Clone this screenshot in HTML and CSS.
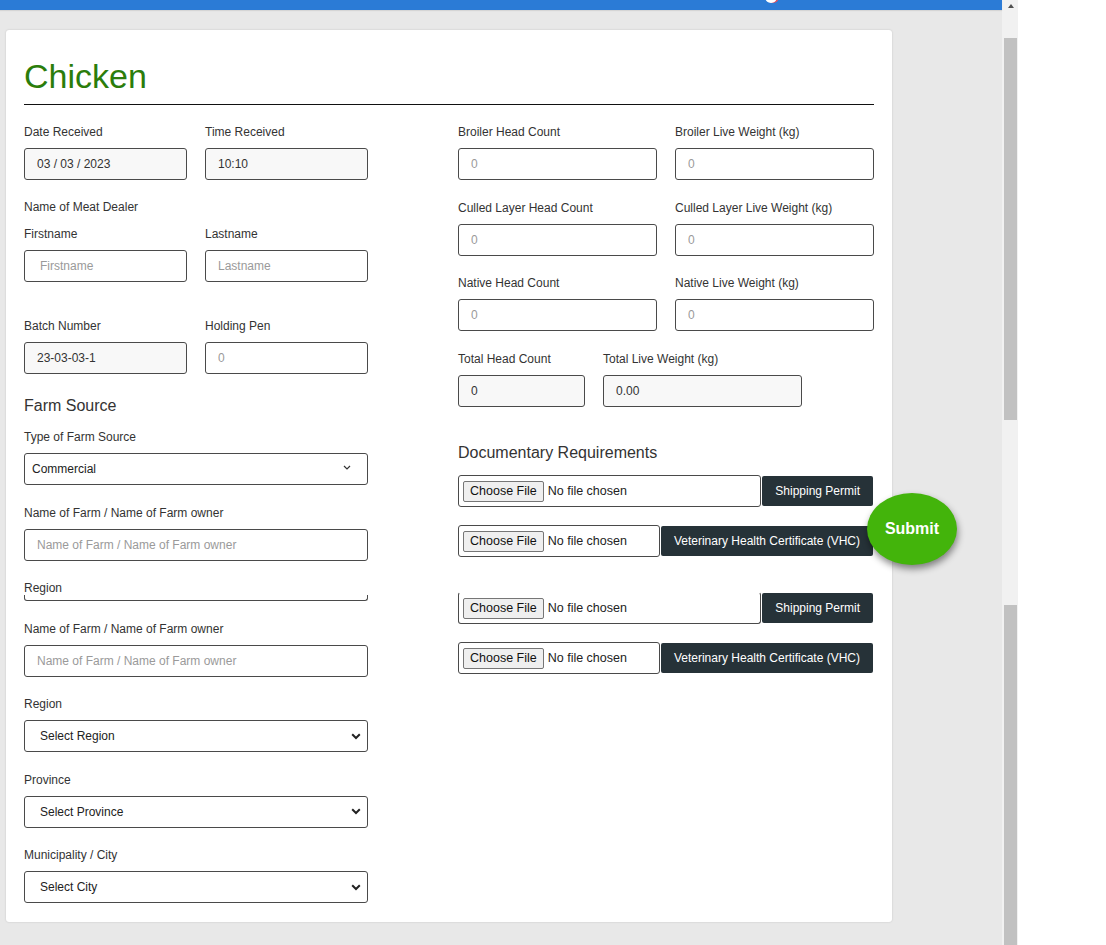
FILE: index.html
```html
<!DOCTYPE html>
<html lang="en">
<head>
<meta charset="utf-8">
<title>Chicken</title>
<link rel="stylesheet" href="styles.css">
</head>
<body>
<div class="screen">
  <div class="app">
    <div class="topbar"><span class="topbar-mark"></span></div>
    <div class="content">
      <div class="card">
        <h1 class="title">Chicken</h1>
        <hr class="rule">
        <div class="columns">
          <div class="col-left">
            <div class="row pair pair-left">
              <div class="field"><label class="lbl">Date Received</label><input class="ctl ctl-ro" value="03 / 03 / 2023" readonly></div>
              <div class="field"><label class="lbl">Time Received</label><input class="ctl ctl-ro" value="10:10" readonly></div>
            </div>
            <div class="caption">Name of Meat Dealer</div>
            <div class="row row-lg pair pair-left">
              <div class="field"><label class="lbl">Firstname</label><input class="ctl ctl-indent" placeholder="Firstname"></div>
              <div class="field"><label class="lbl">Lastname</label><input class="ctl" placeholder="Lastname"></div>
            </div>
            <div class="row row-md pair pair-left">
              <div class="field"><label class="lbl">Batch Number</label><input class="ctl ctl-ro" value="23-03-03-1" readonly></div>
              <div class="field"><label class="lbl">Holding Pen</label><input class="ctl" placeholder="0"></div>
            </div>
            <h2 class="section-title section-farm">Farm Source</h2>
            <div class="row field">
              <label class="lbl">Type of Farm Source</label>
              <div class="select select-small">
                <span>Commercial</span>
                <svg class="chev-small" width="8" height="5" viewBox="0 0 8 5"><path d="M1 1 L4 4 L7 1" fill="none" stroke="#333" stroke-width="1.2"/></svg>
              </div>
            </div>
            <div class="row field">
              <label class="lbl">Name of Farm / Name of Farm owner</label>
              <input class="ctl" placeholder="Name of Farm / Name of Farm owner">
            </div>
            <div class="row row-clip field">
              <label class="lbl lbl-tight">Region</label>
              <div class="clipped-box"></div>
            </div>
            <div class="row field">
              <label class="lbl">Name of Farm / Name of Farm owner</label>
              <input class="ctl" placeholder="Name of Farm / Name of Farm owner">
            </div>
            <div class="row field">
              <label class="lbl">Region</label>
              <div class="select">
                <span>Select Region</span>
                <svg class="chev" width="10" height="7" viewBox="0 0 10 7"><path d="M1.2 1.3 L5 5 L8.8 1.3" fill="none" stroke="#222" stroke-width="2"/></svg>
              </div>
            </div>
            <div class="row field">
              <label class="lbl">Province</label>
              <div class="select">
                <span>Select Province</span>
                <svg class="chev" width="10" height="7" viewBox="0 0 10 7"><path d="M1.2 1.3 L5 5 L8.8 1.3" fill="none" stroke="#222" stroke-width="2"/></svg>
              </div>
            </div>
            <div class="row field">
              <label class="lbl">Municipality / City</label>
              <div class="select">
                <span>Select City</span>
                <svg class="chev" width="10" height="7" viewBox="0 0 10 7"><path d="M1.2 1.3 L5 5 L8.8 1.3" fill="none" stroke="#222" stroke-width="2"/></svg>
              </div>
            </div>
          </div>

          <div class="col-right">
            <div class="row pair pair-right">
              <div class="field"><label class="lbl">Broiler Head Count</label><input class="ctl" placeholder="0"></div>
              <div class="field"><label class="lbl">Broiler Live Weight (kg)</label><input class="ctl" placeholder="0"></div>
            </div>
            <div class="row pair pair-right">
              <div class="field"><label class="lbl">Culled Layer Head Count</label><input class="ctl" placeholder="0"></div>
              <div class="field"><label class="lbl">Culled Layer Live Weight (kg)</label><input class="ctl" placeholder="0"></div>
            </div>
            <div class="row pair pair-right">
              <div class="field"><label class="lbl">Native Head Count</label><input class="ctl" placeholder="0"></div>
              <div class="field"><label class="lbl">Native Live Weight (kg)</label><input class="ctl" placeholder="0"></div>
            </div>
            <div class="row row-lg pair pair-total">
              <div class="field"><label class="lbl">Total Head Count</label><input class="ctl ctl-ro" value="0" readonly></div>
              <div class="field"><label class="lbl">Total Live Weight (kg)</label><input class="ctl ctl-ro" value="0.00" readonly></div>
            </div>
            <h2 class="section-title section-docs">Documentary Requirements</h2>
            <div class="file-row">
              <div class="file-box"><span class="file-btn">Choose File</span><span class="file-name">No file chosen</span></div>
              <button class="doc-btn" type="button">Shipping Permit</button>
            </div>
            <div class="file-row file-row-gap">
              <div class="file-box"><span class="file-btn">Choose File</span><span class="file-name">No file chosen</span></div>
              <button class="doc-btn" type="button">Veterinary Health Certificate (VHC)</button>
            </div>
            <div class="file-row">
              <div class="file-box file-box-clip"><span class="file-btn">Choose File</span><span class="file-name">No file chosen</span></div>
              <button class="doc-btn" type="button">Shipping Permit</button>
            </div>
            <div class="file-row">
              <div class="file-box"><span class="file-btn">Choose File</span><span class="file-name">No file chosen</span></div>
              <button class="doc-btn" type="button">Veterinary Health Certificate (VHC)</button>
            </div>
          </div>
        </div>
      </div>
    </div>
    <button class="submit" type="button">Submit</button>
  </div>
  <div class="scrollbar">
    <div class="scroll-arrow-area"><span class="scroll-arrow"></span></div>
    <div class="thumb thumb-top"></div>
    <div class="thumb thumb-bottom"></div>
  </div>
  <div class="blank"></div>
</div>
</body>
</html>
```

FILE: styles.css
```css
html, body {
  margin: 0;
  padding: 0;
}
body {
  font-family: "Liberation Sans", Arial, sans-serif;
  background: #ffffff;
  color: #333333;
}
.screen {
  display: flex;
  width: 1106px;
  height: 945px;
  overflow: hidden;
}
.app {
  position: relative;
  flex: none;
  width: 1002px;
  height: 945px;
  background: #e8e8e8;
}
.topbar {
  position: relative;
  height: 10px;
  background: #2b7bd6;
  box-shadow: 0 1px 1px rgba(0, 0, 0, 0.08);
}
.topbar-mark {
  position: absolute;
  left: 765px;
  top: -3px;
  width: 12px;
  height: 6px;
  border-radius: 0 0 6px 6px;
  background: #ffffff;
  box-shadow: 2px 0 0 #e05060;
}
.content {
  padding: 20px 0 0 6px;
}
.card {
  width: 886px;
  box-sizing: border-box;
  background: #ffffff;
  border-radius: 3px;
  box-shadow: 0 0 2px rgba(0, 0, 0, 0.18);
  padding: 26px 18px 19px;
}
.title {
  margin: 0;
  font-size: 34px;
  line-height: 40px;
  font-weight: normal;
  color: #2b7d0b;
}
.rule {
  margin: 8px 0 0;
  border: 0;
  border-top: 1px solid #111111;
  height: 0;
}
.columns {
  display: flex;
  justify-content: space-between;
  margin-top: 19px;
}
.col-left {
  width: 344px;
}
.col-right {
  width: 416px;
}
.row {
  margin-bottom: 19.5px;
}
.row:last-child {
  margin-bottom: 0;
}
.row-lg {
  margin-bottom: 36.5px;
}
.row-md {
  margin-bottom: 22px;
}
.row-clip {
  margin-bottom: 19.5px;
}
.pair {
  display: grid;
  column-gap: 18px;
}
.pair-left {
  grid-template-columns: 163px 163px;
}
.pair-right {
  grid-template-columns: 199px 199px;
}
.pair-total {
  grid-template-columns: 127px 199px;
}
.field {
  display: flex;
  flex-direction: column;
}
.lbl, .caption {
  display: block;
  font-size: 12px;
  line-height: 14px;
  padding-top: 1px;
  color: #333333;
  margin-bottom: 9px;
}
.caption {
  padding-top: 0;
  margin-bottom: 12px;
}
.lbl-tight {
  margin-bottom: 0;
}
.ctl {
  box-sizing: border-box;
  width: 100%;
  height: 32px;
  margin: 0;
  padding: 0 12px;
  border: 1px solid #4a4a4a;
  border-radius: 3px;
  background: #ffffff;
  font-family: "Liberation Sans", Arial, sans-serif;
  font-size: 12px;
  color: #333333;
  outline: none;
}
.ctl::placeholder {
  color: #9a9a9a;
}
.ctl-ro {
  background: #f8f8f8;
}
.ctl-indent {
  padding-left: 15px;
}
.section-title {
  margin: 0;
  padding-top: 1px;
  font-size: 16px;
  line-height: 18px;
  font-weight: normal;
  color: #333333;
}
.section-farm {
  margin-bottom: 14px;
}
.section-docs {
  margin-bottom: 13px;
}
.select {
  box-sizing: border-box;
  height: 32px;
  display: flex;
  align-items: center;
  justify-content: space-between;
  padding: 0 6px 0 15px;
  border: 1px solid #4a4a4a;
  border-radius: 3px;
  background: #ffffff;
  font-size: 12px;
  color: #222222;
}
.select-small {
  padding: 0 16px 0 7px;
}
.chev-small {
  margin-top: -4px;
}
.clipped-box {
  box-sizing: border-box;
  height: 6px;
  border: 1px solid #4a4a4a;
  border-top: 0;
  border-radius: 0 0 3px 3px;
}
.file-row {
  display: flex;
  align-items: center;
  height: 32px;
  margin-bottom: 18px;
}
.file-row:last-child {
  margin-bottom: 0;
}
.file-row-gap {
  margin-bottom: 35px;
}
.file-box {
  flex: 1;
  box-sizing: border-box;
  height: 32px;
  display: flex;
  align-items: center;
  padding-left: 4px;
  border: 1px solid #4a4a4a;
  border-radius: 3px;
  background: #ffffff;
  overflow: hidden;
  white-space: nowrap;
}
.file-box-clip {
  border-top-color: transparent;
}
.file-btn {
  box-sizing: border-box;
  height: 21px;
  display: inline-flex;
  align-items: center;
  padding: 0 6px;
  border: 1px solid #767676;
  border-radius: 2px;
  background: #efefef;
  font-size: 12.5px;
  color: #111111;
  margin-right: 4px;
}
.file-name {
  font-size: 12.5px;
  color: #222222;
}
.doc-btn {
  flex: none;
  height: 30px;
  margin: 0 1px 0 1px;
  padding: 0 13px;
  border: 0;
  border-radius: 2px;
  background: #263238;
  color: #ffffff;
  font-family: "Liberation Sans", Arial, sans-serif;
  font-size: 12px;
  white-space: nowrap;
}
.submit {
  position: absolute;
  left: 867px;
  top: 493px;
  width: 90px;
  height: 72px;
  padding: 0;
  border: 0;
  border-radius: 50%;
  background: #43b40b;
  color: #ffffff;
  font-family: "Liberation Sans", Arial, sans-serif;
  font-size: 16px;
  font-weight: bold;
  box-shadow: 1px 4px 7px rgba(0, 0, 0, 0.45);
}
.scrollbar {
  flex: none;
  width: 16px;
  height: 945px;
  box-sizing: border-box;
  padding: 0 1px 0 2px;
  background: #f1f1f1;
  display: flex;
  flex-direction: column;
}
.scroll-arrow-area {
  height: 38px;
  display: flex;
  justify-content: center;
  align-items: flex-start;
}
.scroll-arrow {
  margin-top: 4px;
  width: 0;
  height: 0;
  border-left: 3.5px solid transparent;
  border-right: 3.5px solid transparent;
  border-bottom: 4px solid #505050;
}
.thumb {
  background: #c1c1c1;
}
.thumb-top {
  height: 382px;
  margin-bottom: 185px;
}
.thumb-bottom {
  flex: 1;
}
.blank {
  flex: 1;
  background: #ffffff;
}
```
